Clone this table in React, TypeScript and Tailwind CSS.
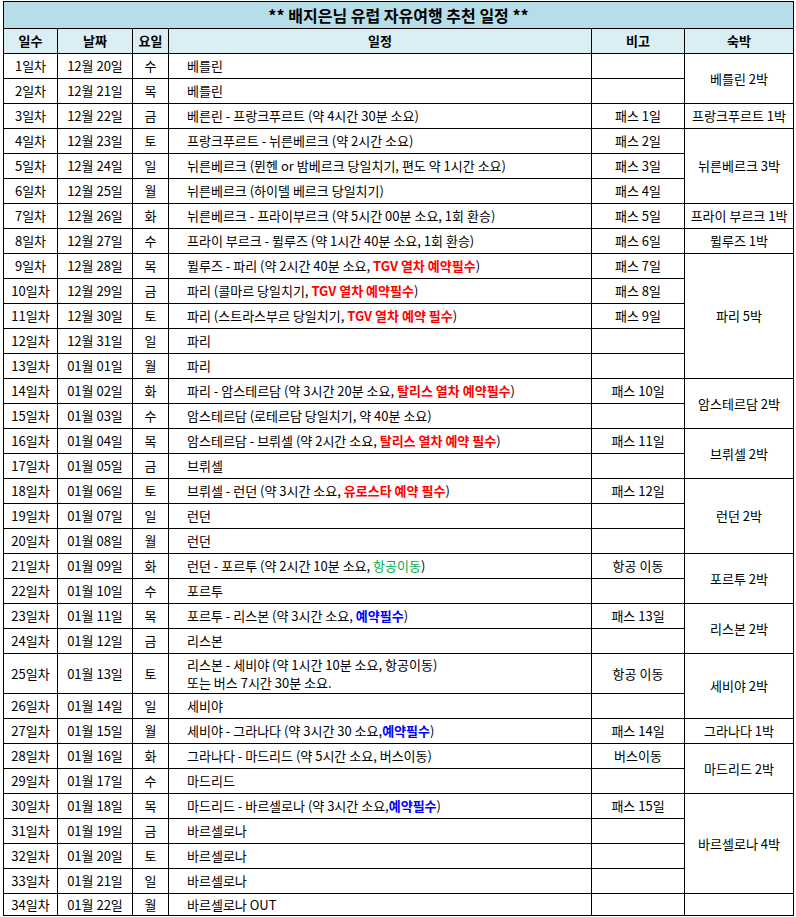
import React from "react";

type Seg = { t: string; c?: "r" | "b" | "g" };
type Row = {
  d: string;
  date: string;
  w: string;
  plan: Seg[][];
  note?: string;
  stay?: { t: string; span: number } | null;
  h?: number;
};

const R = (t: string): Seg => ({ t, c: "r" });
const B = (t: string): Seg => ({ t, c: "b" });
const G = (t: string): Seg => ({ t, c: "g" });
const N = (t: string): Seg => ({ t });

const rows: Row[] = [
  { d: "1일차", date: "12월 20일", w: "수", plan: [[N("베를린")]], stay: { t: "베를린 2박", span: 2 } },
  { d: "2일차", date: "12월 21일", w: "목", plan: [[N("베를린")]] },
  { d: "3일차", date: "12월 22일", w: "금", plan: [[N("베른린 - 프랑크푸르트 (약 4시간 30분 소요)")]], note: "패스 1일", stay: { t: "프랑크푸르트 1박", span: 1 } },
  { d: "4일차", date: "12월 23일", w: "토", plan: [[N("프랑크푸르트 - 뉘른베르크 (약 2시간 소요)")]], note: "패스 2일", stay: { t: "뉘른베르크 3박", span: 3 } },
  { d: "5일차", date: "12월 24일", w: "일", plan: [[N("뉘른베르크 (뮌헨 or 밤베르크 당일치기, 편도 약 1시간 소요)")]], note: "패스 3일" },
  { d: "6일차", date: "12월 25일", w: "월", plan: [[N("뉘른베르크 (하이델 베르크 당일치기)")]], note: "패스 4일" },
  { d: "7일차", date: "12월 26일", w: "화", plan: [[N("뉘른베르크 - 프라이부르크 (약 5시간 00분 소요, 1회 환승)")]], note: "패스 5일", stay: { t: "프라이 부르크 1박", span: 1 } },
  { d: "8일차", date: "12월 27일", w: "수", plan: [[N("프라이 부르크 - 뮐루즈 (약 1시간 40분 소요, 1회 환승)")]], note: "패스 6일", stay: { t: "뮐루즈 1박", span: 1 } },
  { d: "9일차", date: "12월 28일", w: "목", plan: [[N("뮐루즈 - 파리 (약 2시간 40분 소요, "), R("TGV 열차 예약필수"), N(")")]], note: "패스 7일", stay: { t: "파리 5박", span: 5 } },
  { d: "10일차", date: "12월 29일", w: "금", plan: [[N("파리 (콜마르 당일치기, "), R("TGV 열차 예약필수"), N(")")]], note: "패스 8일" },
  { d: "11일차", date: "12월 30일", w: "토", plan: [[N("파리 (스트라스부르 당일치기, "), R("TGV 열차 예약 필수"), N(")")]], note: "패스 9일" },
  { d: "12일차", date: "12월 31일", w: "일", plan: [[N("파리")]] },
  { d: "13일차", date: "01월 01일", w: "월", plan: [[N("파리")]] },
  { d: "14일차", date: "01월 02일", w: "화", plan: [[N("파리 - 암스테르담 (약 3시간 20분 소요, "), R("탈리스 열차 예약필수"), N(")")]], note: "패스 10일", stay: { t: "암스테르담 2박", span: 2 } },
  { d: "15일차", date: "01월 03일", w: "수", plan: [[N("암스테르담 (로테르담 당일치기, 약 40분 소요)")]] },
  { d: "16일차", date: "01월 04일", w: "목", plan: [[N("암스테르담 - 브뤼셀 (약 2시간 소요, "), R("탈리스 열차 예약 필수"), N(")")]], note: "패스 11일", stay: { t: "브뤼셀 2박", span: 2 } },
  { d: "17일차", date: "01월 05일", w: "금", plan: [[N("브뤼셀")]] },
  { d: "18일차", date: "01월 06일", w: "토", plan: [[N("브뤼셀 - 런던 (약 3시간 소요, "), R("유로스타 예약 필수"), N(")")]], note: "패스 12일", stay: { t: "런던 2박", span: 3 } },
  { d: "19일차", date: "01월 07일", w: "일", plan: [[N("런던")]] },
  { d: "20일차", date: "01월 08일", w: "월", plan: [[N("런던")]] },
  { d: "21일차", date: "01월 09일", w: "화", plan: [[N("런던 - 포르투 (약 2시간 10분 소요, "), G("항공이동"), N(")")]], note: "항공 이동", stay: { t: "포르투 2박", span: 2 } },
  { d: "22일차", date: "01월 10일", w: "수", plan: [[N("포르투")]] },
  { d: "23일차", date: "01월 11일", w: "목", plan: [[N("포르투 - 리스본 (약 3시간 소요, "), B("예약필수"), N(")")]], note: "패스 13일", stay: { t: "리스본 2박", span: 2 } },
  { d: "24일차", date: "01월 12일", w: "금", plan: [[N("리스본")]] },
  { d: "25일차", date: "01월 13일", w: "토", plan: [[N("리스본 - 세비야 (약 1시간 10분 소요, 항공이동)")], [N("또는 버스 7시간 30분 소요.")]], note: "항공 이동", stay: { t: "세비야 2박", span: 2 }, h: 40 },
  { d: "26일차", date: "01월 14일", w: "일", plan: [[N("세비야")]] },
  { d: "27일차", date: "01월 15일", w: "월", plan: [[N("세비야 - 그라나다 (약 3시간 30 소요,"), B("예약필수"), N(")")]], note: "패스 14일", stay: { t: "그라나다 1박", span: 1 } },
  { d: "28일차", date: "01월 16일", w: "화", plan: [[N("그라나다 - 마드리드 (약 5시간 소요, 버스이동)")]], note: "버스이동", stay: { t: "마드리드 2박", span: 2 } },
  { d: "29일차", date: "01월 17일", w: "수", plan: [[N("마드리드")]] },
  { d: "30일차", date: "01월 18일", w: "목", plan: [[N("마드리드 - 바르셀로나 (약 3시간 소요,"), B("예약필수"), N(")")]], note: "패스 15일", stay: { t: "바르셀로나 4박", span: 4 } },
  { d: "31일차", date: "01월 19일", w: "금", plan: [[N("바르셀로나")]] },
  { d: "32일차", date: "01월 20일", w: "토", plan: [[N("바르셀로나")]] },
  { d: "33일차", date: "01월 21일", w: "일", plan: [[N("바르셀로나")]] },
  { d: "34일차", date: "01월 22일", w: "월", plan: [[N("바르셀로나 OUT")]], stay: { t: "", span: 1 }, h: 22 },
];

const segCls = (c?: string) =>
  c === "r"
    ? "text-[#ff0000] font-semibold"
    : c === "b"
    ? "text-[#0000ff] font-semibold"
    : c === "g"
    ? "text-[#00b050]"
    : "";

const td = "border border-black align-middle";

export default function App() {
  return (
    <div
      className="bg-white w-[796px] h-[917px] pl-[3px] pt-px text-black text-[13px] leading-[18px]"
      style={{ fontFamily: '"Noto Sans CJK KR", "Noto Sans", sans-serif' }}
    >
      <table className="table-fixed border-collapse w-[790px]">
        <colgroup>
          <col className="w-[54px]" />
          <col className="w-[75px]" />
          <col className="w-[36px]" />
          <col className="w-[423px]" />
          <col className="w-[93px]" />
          <col className="w-[109px]" />
        </colgroup>
        <tbody>
          <tr className="h-[27px]">
            <td colSpan={6} className={`${td} bg-[#b7dee8] text-center font-bold text-[16px] leading-[20px]`}>
              ** 배지은님 유럽 자유여행 추천 일정 **
            </td>
          </tr>
          <tr className="h-[25px] bg-[#daeef3] font-bold">
            <td className={`${td} text-center`}>일수</td>
            <td className={`${td} text-center`}>날짜</td>
            <td className={`${td} text-center`}>요일</td>
            <td className={`${td} text-center`}>일정</td>
            <td className={`${td} text-center`}>비고</td>
            <td className={`${td} text-center`}>숙박</td>
          </tr>
          {rows.map((r, i) => (
            <tr key={i} style={{ height: r.h ?? 25 }}>
              <td className={`${td} text-center`}>{r.d}</td>
              <td className={`${td} text-center`}>{r.date}</td>
              <td className={`${td} text-center`}>{r.w}</td>
              <td className={`${td} pl-[18px] whitespace-nowrap`}>
                {r.plan.map((line, li) => (
                  <div key={li}>
                    {line.map((s, si) => (
                      <span key={si} className={segCls(s.c)}>
                        {s.t}
                      </span>
                    ))}
                  </div>
                ))}
              </td>
              <td className={`${td} text-center`}>{r.note ?? ""}</td>
              {r.stay ? (
                <td rowSpan={r.stay.span} className={`${td} text-center whitespace-nowrap`}>
                  {r.stay.t}
                </td>
              ) : null}
            </tr>
          ))}
        </tbody>
      </table>
    </div>
  );
}
